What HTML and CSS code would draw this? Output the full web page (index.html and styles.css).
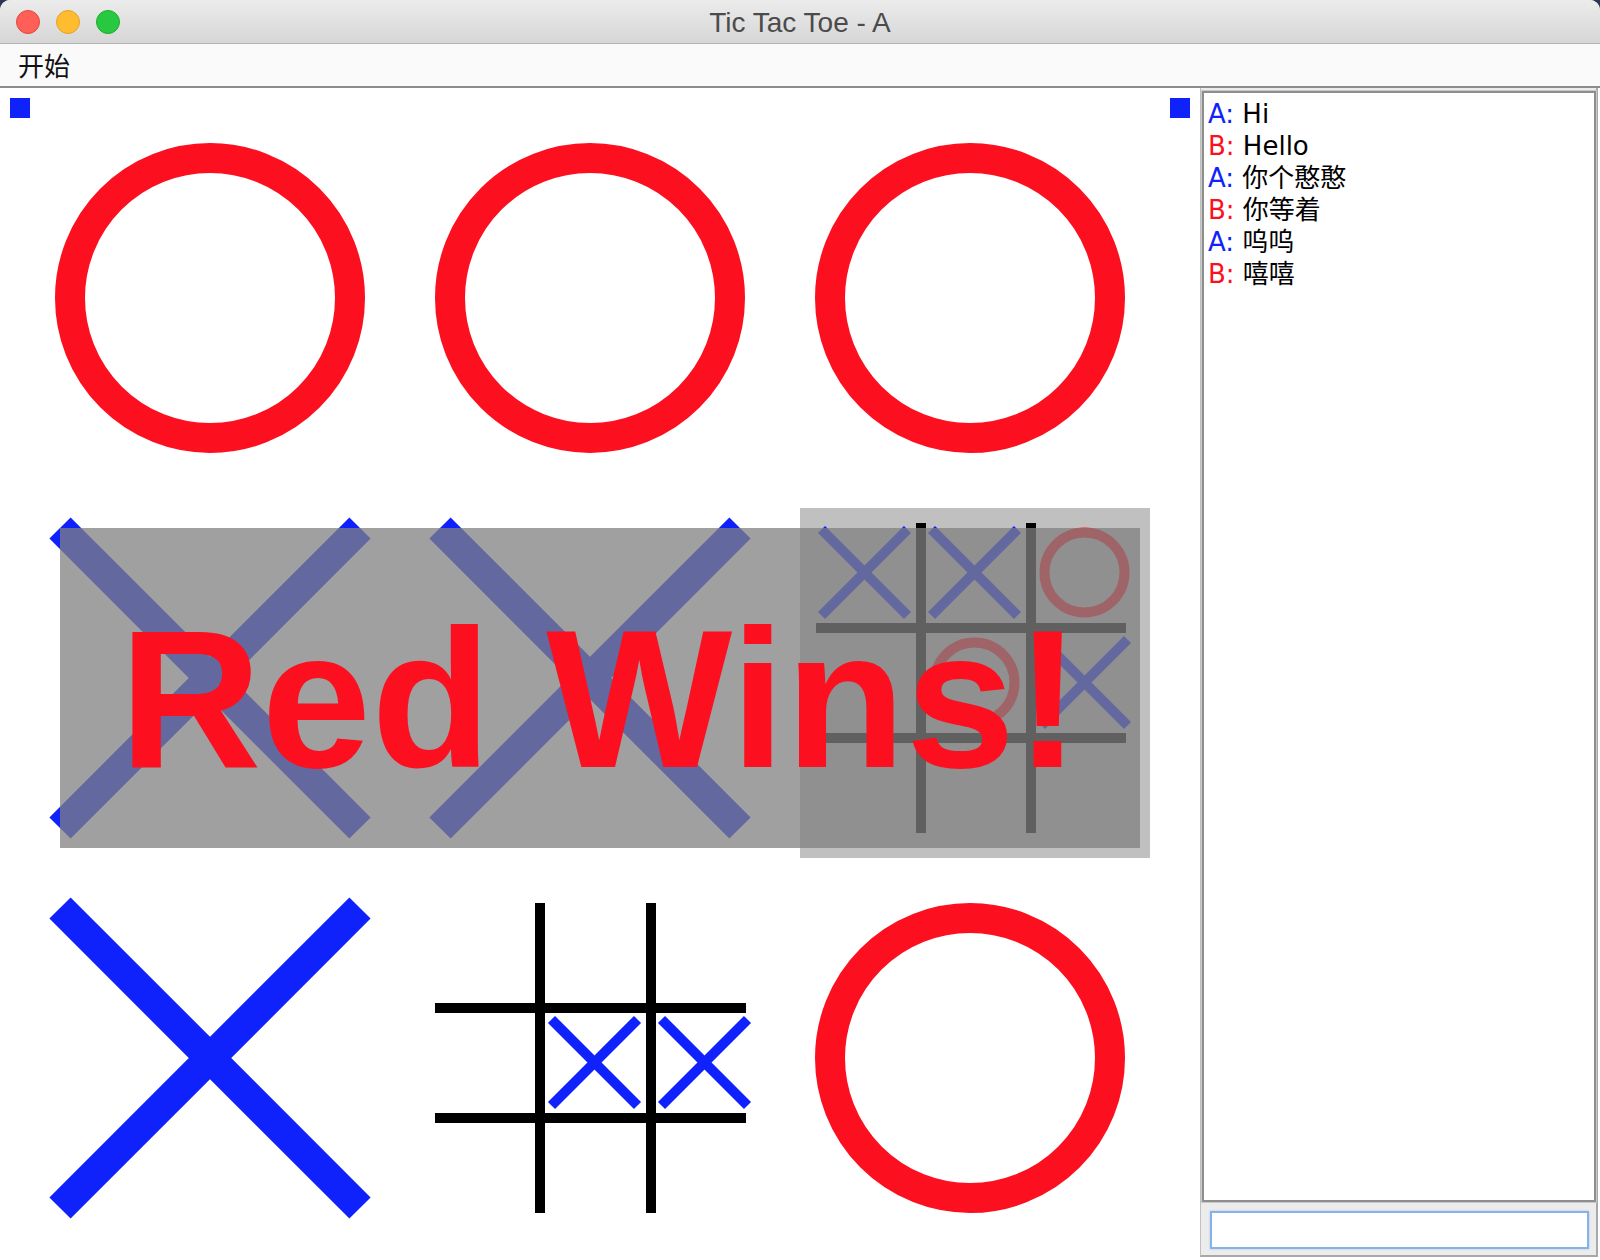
FILE: index.html
```html
<!DOCTYPE html>
<html lang="zh">
<head>
<meta charset="utf-8">
<title>Tic Tac Toe - A</title>
<link rel="stylesheet" href="styles.css">
</head>
<body>
<div class="window">
  <div class="titlebar">
    <div class="lights">
      <span class="light light-close"></span>
      <span class="light light-min"></span>
      <span class="light light-max"></span>
    </div>
    <div class="title">Tic Tac Toe - A</div>
    <div></div>
  </div>
  <div class="menubar"><span class="menu">开始</span></div>
  <div class="content">
    <div class="canvas">
      <svg class="board" width="1200" height="1172" viewBox="0 0 1200 1172">
        <rect x="10" y="10" width="20" height="20" fill="#0f22fc"/>
        <rect x="1170" y="10" width="20" height="20" fill="#0f22fc"/>
        <g fill="none" stroke="#fc1020" stroke-width="30">
          <circle cx="210" cy="210" r="140"/>
          <circle cx="590" cy="210" r="140"/>
          <circle cx="970" cy="210" r="140"/>
          <circle cx="970" cy="970" r="140"/>
        </g>
        <g stroke="#0f22fc" stroke-width="30" stroke-linecap="butt" fill="none">
          <path d="M60 440 L360 740 M360 440 L60 740"/>
          <path d="M440 440 L740 740 M740 440 L440 740"/>
          <path d="M60 820 L360 1120 M360 820 L60 1120"/>
        </g>
        <!-- nested board, row 2 col 3 -->
        <rect x="800" y="420" width="350" height="350" fill="#c0c0c0"/>
        <g fill="#000">
          <rect x="916" y="435" width="10" height="310"/>
          <rect x="1026" y="435" width="10" height="310"/>
          <rect x="816" y="535" width="310" height="10"/>
          <rect x="816" y="645" width="310" height="10"/>
        </g>
        <g stroke="#0f22fc" stroke-width="10" fill="none">
          <path d="M821.5 441.5 L907.5 527.5 M907.5 441.5 L821.5 527.5"/>
          <path d="M931.5 441.5 L1017.5 527.5 M1017.5 441.5 L931.5 527.5"/>
          <path d="M1041.5 551.5 L1127.5 637.5 M1127.5 551.5 L1041.5 637.5"/>
        </g>
        <g stroke="#fc1020" stroke-width="10" fill="none">
          <circle cx="1084.5" cy="484.5" r="40"/>
          <circle cx="974.5" cy="594.5" r="40"/>
        </g>
        <!-- nested board, row 3 col 2 -->
        <g fill="#000">
          <rect x="535" y="815" width="10" height="310"/>
          <rect x="646" y="815" width="10" height="310"/>
          <rect x="435" y="915" width="311" height="10"/>
          <rect x="435" y="1025" width="311" height="10"/>
        </g>
        <g stroke="#0f22fc" stroke-width="10" fill="none">
          <path d="M551.5 931.5 L637.5 1017.5 M637.5 931.5 L551.5 1017.5"/>
          <path d="M661.5 931.5 L747.5 1017.5 M747.5 931.5 L661.5 1017.5"/>
        </g>
      </svg>
      <div class="banner">Red Wins!</div>
    </div>
    <div class="chat">
      <div class="log">
        <div class="line"><span class="who who-a">A:</span> Hi</div>
        <div class="line"><span class="who who-b">B:</span> Hello</div>
        <div class="line"><span class="who who-a">A:</span> 你个憨憨</div>
        <div class="line"><span class="who who-b">B:</span> 你等着</div>
        <div class="line"><span class="who who-a">A:</span> 呜呜</div>
        <div class="line"><span class="who who-b">B:</span> 嘻嘻</div>
      </div>
      <div class="inputbar"><div class="input"></div></div>
    </div>
  </div>
</div>
</body>
</html>
```

FILE: styles.css
```css
html, body {
  margin: 0;
  padding: 0;
  background: #2b3650;
}

.window {
  width: 1600px;
  height: 1260px;
  background: #ffffff;
  border-radius: 10px 10px 0 0;
  overflow: hidden;
  display: flex;
  flex-direction: column;
}

.titlebar {
  height: 43px;
  border-bottom: 1px solid #b3b3b3;
  background: linear-gradient(#ececec, #d6d6d6);
  display: grid;
  grid-template-columns: 1fr auto 1fr;
  align-items: center;
}

.lights {
  display: flex;
  gap: 16px;
  padding-left: 16px;
}

.light {
  width: 24px;
  height: 24px;
  border-radius: 50%;
  box-sizing: border-box;
}

.light-close { background: #fe5f57; border: 1px solid #e2463f; }
.light-min { background: #febc2e; border: 1px solid #e1a325; }
.light-max { background: #28c840; border: 1px solid #1dac2c; }

.title {
  font-family: "Liberation Sans", Arial, sans-serif;
  font-size: 28px;
  color: #4b4b4b;
  line-height: 43px;
  padding-top: 1px;
}

.menubar {
  height: 42px;
  border-bottom: 2px solid #8c8c8c;
  background: #fafafa;
  display: flex;
  align-items: center;
  padding-left: 18px;
}

.menu {
  font-family: "Noto Sans CJK SC", "DejaVu Sans", sans-serif;
  font-size: 26px;
  color: #111;
  line-height: 42px;
}

.content {
  flex: 1;
  display: flex;
  background: #ffffff;
  min-height: 0;
}

.canvas {
  position: relative;
  width: 1200px;
  flex: none;
}

.board {
  display: block;
}

.banner {
  position: absolute;
  left: 60px;
  top: 440px;
  width: 1080px;
  height: 320px;
  background: rgba(128, 128, 128, 0.75);
  color: #fc1020;
  font-family: "Liberation Sans", Arial, sans-serif;
  font-weight: bold;
  font-size: 197px;
  line-height: 342px;
  text-align: center;
  white-space: nowrap;
}

.chat {
  width: 398px;
  box-sizing: border-box;
  margin-bottom: 3px;
  border-left: 1px solid #c0c0c0;
  border-right: 2px solid #a8a8a8;
  border-bottom: 2px solid #a8a8a8;
  background: #ececec;
  display: flex;
  flex-direction: column;
}

.log {
  flex: 1;
  margin: 3px 0 0 1px;
  border: 2px solid #8e8e8e;
  box-shadow: 0 0 0 1px #c9c9c9;
  background: #ffffff;
  padding: 5px 4px 3px;
  font-family: "DejaVu Sans", "Noto Sans CJK SC", sans-serif;
  font-size: 26px;
  line-height: 32px;
  color: #000;
}

.who-a { color: #0f22fc; }
.who-b { color: #fc1020; }

.inputbar {
  padding: 9px 7px 6px 9px;
}

.input {
  height: 38px;
  box-sizing: border-box;
  border: 2px solid #86b2ea;
  box-shadow: 0 0 2px #a9c8f0;
  background: #ffffff;
}
```
